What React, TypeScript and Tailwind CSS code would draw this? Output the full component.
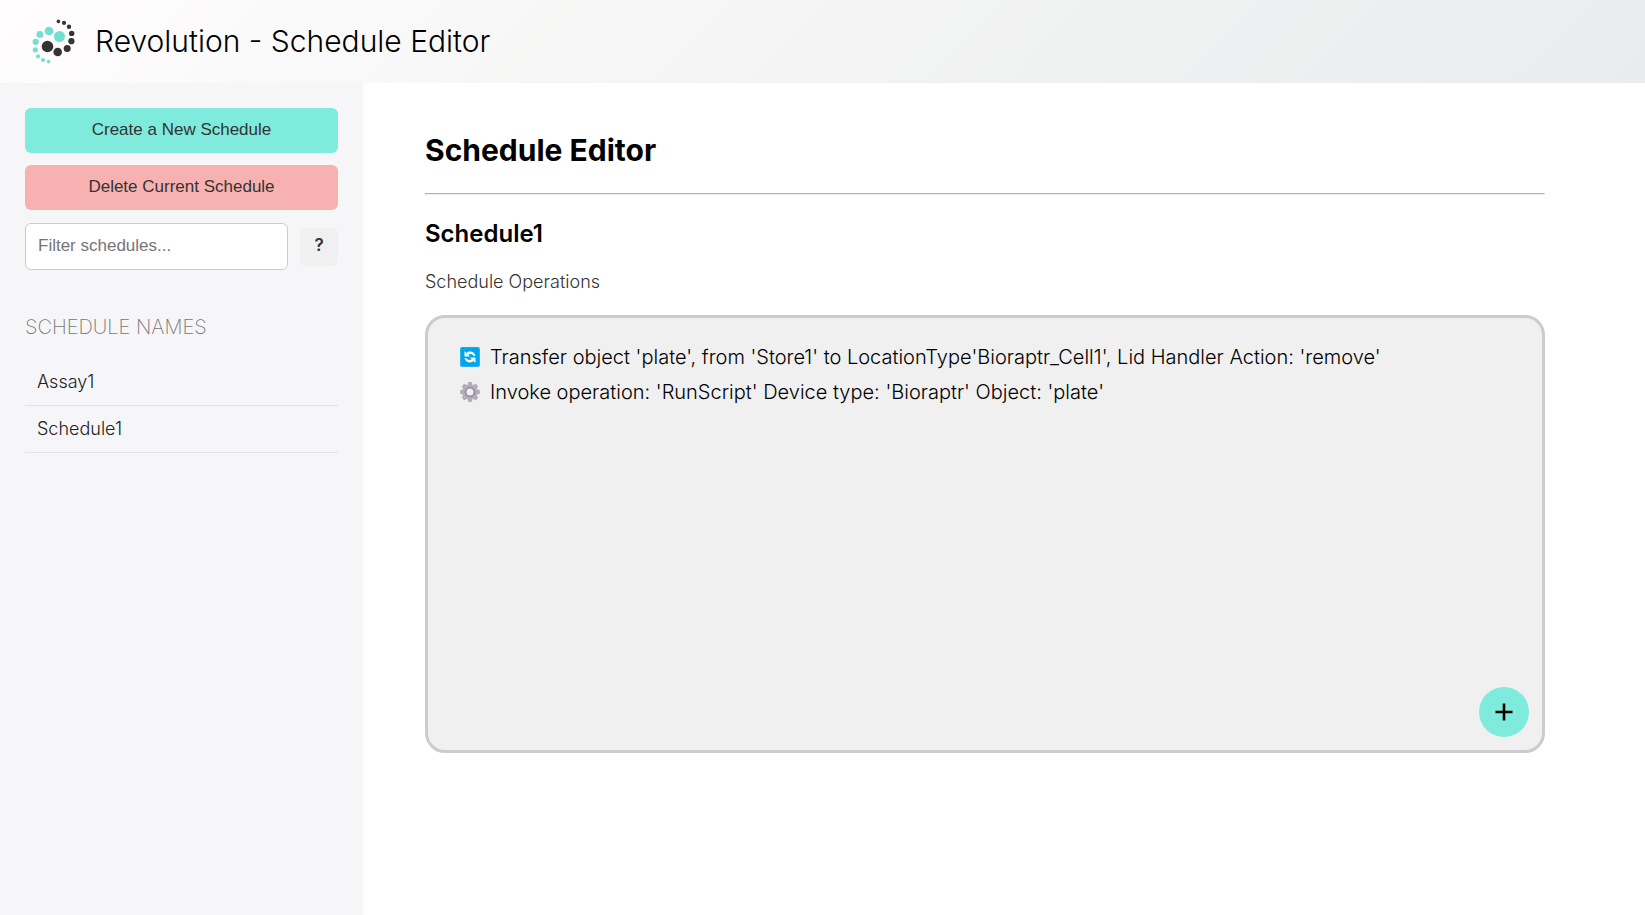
import { useState } from "react";

type Dot = [x: number, y: number, r: number];

const tealDots: Dot[] = [
  [39.5, 16.5, 5.5],
  [29, 11, 4.3],
  [19.9, 14.4, 3.4],
  [15.7, 21.8, 3.1],
  [15.3, 29.8, 2.6],
  [18, 36.3, 2.1],
  [23, 40.1, 2],
  [28.5, 41.5, 1.8],
];

const darkDots: Dot[] = [
  [27.5, 26.5, 5.8],
  [37.7, 32, 4.3],
  [47.2, 28.6, 3.5],
  [51.4, 21.2, 3.1],
  [51.7, 13.4, 2.7],
  [49, 6.7, 2.2],
  [44, 2.9, 2.1],
  [38.4, 1.4, 1.8],
];

function Logo() {
  return (
    <svg viewBox="12 -1 44 46" className="h-[46px] w-11 shrink-0" aria-hidden="true">
      {tealDots.map(([x, y, r]) => (
        <circle key={`${x}-${y}`} cx={x} cy={y} r={r} fill="#73dfd2" />
      ))}
      {darkDots.map(([x, y, r]) => (
        <circle key={`${x}-${y}`} cx={x} cy={y} r={r} fill="#363335" />
      ))}
    </svg>
  );
}

function TransferIcon() {
  return (
    <svg viewBox="0 0 20 20" className="mt-[7px] size-5 shrink-0" aria-hidden="true">
      <rect width="20" height="20" rx="2" fill="#36aeea" />
      <rect x="1" y="0.5" width="18" height="18.5" rx="1.5" fill="#00a6ed" />
      <path d="M4.5 4v5.5H10L8.2 7.8c1.8-1.3 4.3-.8 5.3 1h2C14.3 4.6 9.4 3.3 6.3 5.9z" fill="#fff" />
      <path d="M15.5 16v-5.5H10l1.8 1.7c-1.8 1.3-4.3.8-5.3-1h-2c1.2 4.2 6.1 5.5 9.2 2.900z" fill="#fff" />
    </svg>
  );
}

const teeth = [0, 45, 90, 135, 180, 225, 270, 315];

function GearIcon() {
  return (
    <svg viewBox="-10 -10 20 20" className="mt-[7px] size-5 shrink-0" aria-hidden="true">
      {teeth.map((angle) => (
        <rect key={angle} x="-2.2" y="-9.9" width="4.4" height="5" rx="1.3" fill="#b4acbc" transform={`rotate(${angle})`} />
      ))}
      <circle r="5.9" fill="none" stroke="#b4acbc" strokeWidth="3.6" />
      <circle r="4.4" fill="none" stroke="#998ea4" strokeWidth="1.8" />
    </svg>
  );
}

const schedules = ["Assay1", "Schedule1"];

const operations = [
  {
    icon: <TransferIcon />,
    text: "Transfer object 'plate', from 'Store1' to LocationType'Bioraptr_Cell1', Lid Handler Action: 'remove'",
  },
  {
    icon: <GearIcon />,
    text: "Invoke operation: 'RunScript' Device type: 'Bioraptr' Object: 'plate'",
  },
];

export default function App() {
  const [filter, setFilter] = useState("");
  const visible = schedules.filter((name) => name.toLowerCase().includes(filter.toLowerCase()));

  return (
    <div className="flex min-h-screen flex-col bg-white font-['Inter',sans-serif] text-black">
      <header className="flex items-center gap-[19px] bg-linear-135 from-[#fffdfe] via-[#f3f4f3] to-[#e9ebed] px-8 py-[18px]">
        <Logo />
        <p className="text-[30px] leading-[47px] font-light">Revolution - Schedule Editor</p>
      </header>
      <div className="flex grow">
        <aside className="w-[363px] shrink-0 bg-[#f6f6f9] p-[25px]">
          <div className="flex flex-col gap-3 font-['Liberation_Sans',sans-serif] text-[17px]">
            <button type="button" className="h-[45px] rounded-md bg-[#7eebdd] pb-0.5 text-[#333]">
              Create a New Schedule
            </button>
            <button type="button" className="h-[45px] rounded-md bg-[#f8b1b1] pb-0.5 text-[#333]">
              Delete Current Schedule
            </button>
            <div className="flex items-center gap-3 pt-px">
              <input
                type="text"
                aria-label="Filter schedules"
                placeholder="Filter schedules..."
                value={filter}
                onChange={(event) => setFilter(event.target.value)}
                className="h-[47px] min-w-0 grow rounded-md border border-[#ccc] bg-white px-3 pb-0.5 text-[#333] placeholder:text-[#757575]"
              />
              <button
                type="button"
                aria-label="Help"
                className="size-[38px] rounded-md bg-[#f0f0f0] pb-0.5 font-['Inter',sans-serif] font-semibold text-[#333]"
              >
                ?
              </button>
            </div>
          </div>
          <h2 className="mt-[45px] text-xl leading-6 font-extralight text-[#777] uppercase">Schedule Names</h2>
          <ul className="mt-5">
            {visible.map((name) => (
              <li key={name} className="border-b border-[#e2e2e4]">
                <a href={`#${name}`} className="block px-3 py-[11px] text-lg leading-6 font-light text-[#222]">
                  {name}
                </a>
              </li>
            ))}
          </ul>
        </aside>
        <main className="min-w-0 grow pt-[49px] pr-[100px] pl-[62px]">
          <h1 className="text-[30px] leading-9 font-bold">Schedule Editor</h1>
          <hr className="mt-[25px] border border-t-[#b0b0b0] border-r-[#eee] border-b-[#eee] border-l-[#b0b0b0]" />
          <h2 className="mt-6 text-2xl leading-[30px] font-semibold">Schedule1</h2>
          <p className="mt-[21px] text-lg leading-6 font-light text-[#333]">Schedule Operations</p>
          <section className="relative mt-[21px] h-[438px] rounded-[20px] border-3 border-[#ccc] bg-[#f0f0f0] px-8 py-[22px]">
            <ul>
              {operations.map(({ icon, text }) => (
                <li key={text} className="flex items-start gap-2.5 text-xl leading-[35px] font-light">
                  {icon}
                  {text}
                </li>
              ))}
            </ul>
            <button
              type="button"
              aria-label="Add operation"
              className="absolute right-[13px] bottom-[13px] flex size-[50px] items-center justify-center rounded-full bg-[#7eebdd]"
            >
              <svg viewBox="0 0 18 18" className="size-[18px]" aria-hidden="true">
                <path d="M9 0.500v17M0.500 9h17" stroke="#000" strokeWidth="2.600" />
              </svg>
            </button>
          </section>
        </main>
      </div>
    </div>
  );
}
